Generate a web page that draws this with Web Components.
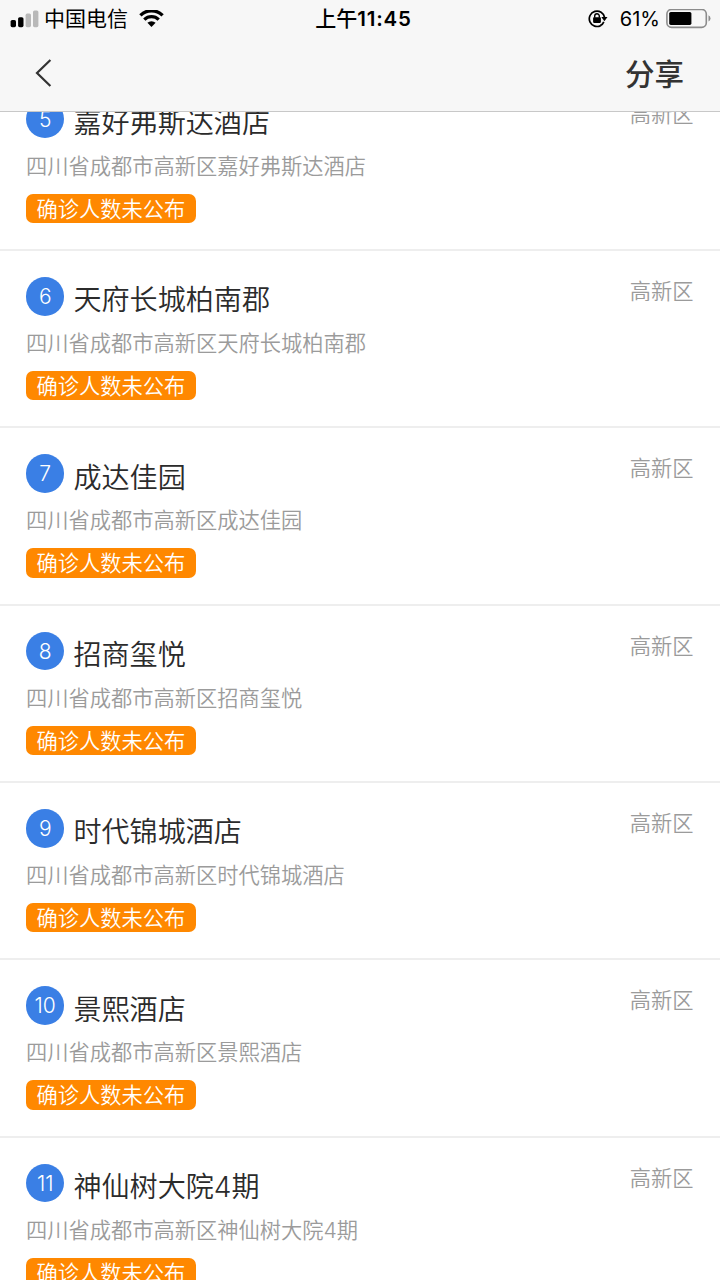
<!DOCTYPE html>
<html lang="zh-CN">
<head>
<meta charset="UTF-8">
<meta name="viewport" content="width=device-width, initial-scale=1.0">
<title>分享</title>
<style>
    html, body {
        margin: 0;
        height: 100%;
        overflow: hidden;
        background: #fff;
        font-family: "Inter", "Noto Sans CJK SC", sans-serif;
    }
</style>
</head>
<body>
<app-screen>
    <status-bar slot="top" carrier="中国电信" period="上午" time="11:45" battery="61"></status-bar>
    <nav-header slot="top">分享</nav-header>
    <place-item no="5" district="高新区" address="四川省成都市高新区嘉好弗斯达酒店" status="确诊人数未公布">嘉好弗斯达酒店</place-item>
    <place-item no="6" district="高新区" address="四川省成都市高新区天府长城柏南郡" status="确诊人数未公布">天府长城柏南郡</place-item>
    <place-item no="7" district="高新区" address="四川省成都市高新区成达佳园" status="确诊人数未公布">成达佳园</place-item>
    <place-item no="8" district="高新区" address="四川省成都市高新区招商玺悦" status="确诊人数未公布">招商玺悦</place-item>
    <place-item no="9" district="高新区" address="四川省成都市高新区时代锦城酒店" status="确诊人数未公布">时代锦城酒店</place-item>
    <place-item no="10" district="高新区" address="四川省成都市高新区景熙酒店" status="确诊人数未公布">景熙酒店</place-item>
    <place-item no="11" district="高新区" address="四川省成都市高新区神仙树大院4期" status="确诊人数未公布">神仙树大院4期</place-item>
</app-screen>

<script>
class AppScreen extends HTMLElement {
    connectedCallback() {
        this.attachShadow({ mode: 'open' });
        this.shadowRoot.innerHTML = `
            <style>
                :host {
                    display: flex;
                    flex-direction: column;
                    width: 720px;
                    height: 1280px;
                    overflow: hidden;
                }

                .top {
                    flex: none;
                    height: 111px;
                    background: #f7f7f7;
                    border-bottom: 1px solid #c8c8c8;
                }

                .list {
                    flex: 1;
                    min-height: 0;
                    overflow: hidden;
                }

                /* the list is scrolled part of the way into its first row */
                .rows {
                    margin-top: -38.2px;
                }
            </style>
            <div class="top"><slot name="top"></slot></div>
            <div class="list"><div class="rows"><slot></slot></div></div>
        `;
    }
}

class StatusBar extends HTMLElement {
    connectedCallback() {
        const battery = this.getAttribute('battery');
        this.attachShadow({ mode: 'open' });
        this.shadowRoot.innerHTML = `
            <style>
                :host {
                    display: grid;
                    grid-template-columns: 1fr auto 1fr;
                    align-items: center;
                    height: 37px;
                    padding: 0 9px 0 10px;
                    box-sizing: border-box;
                    color: #000;
                    font-size: 21px;
                    line-height: 37px;
                }

                svg {
                    display: block;
                    flex: none;
                }

                .left, .right {
                    display: flex;
                    align-items: center;
                }

                .right {
                    justify-content: flex-end;
                }

                .carrier {
                    margin: 0 11px 0 5px;
                    padding-bottom: 2px;
                    line-height: 35px;
                }

                .time {
                    padding-left: 6px;
                    padding-bottom: 1px;
                    line-height: 36px;
                    font-weight: 500;
                }

                .time b {
                    font-size: 20.5px;
                    font-weight: 600;
                    letter-spacing: 0.8px;
                }

                .percent {
                    margin: 0 6px 0 12px;
                    padding-top: 1px;
                    font-size: 20px;
                }
            </style>
            <div class="left">
                <svg width="29" height="18" viewBox="0 0 29 18">
                    <rect x="0.6" y="10" width="5.4" height="7.2" rx="1.6"/>
                    <rect x="8.1" y="7.2" width="5.4" height="10" rx="1.6"/>
                    <rect x="15.6" y="3.6" width="5.4" height="13.6" rx="1.6" fill="#b9b9b9"/>
                    <rect x="23" y="0.4" width="5.4" height="16.8" rx="1.6" fill="#b9b9b9"/>
                </svg>
                <span class="carrier">${this.getAttribute('carrier')}</span>
                <svg width="25" height="18" viewBox="0 0 25 18">
                    <g fill="none" stroke="#000" stroke-width="3.3">
                        <path d="M1.4 5.3a15.8 15.8 0 0 1 22.2 0"/>
                        <path d="M5.3 9.6a10.4 10.4 0 0 1 14.4 0"/>
                    </g>
                    <path d="M8.4 12.8a6 6 0 0 1 8.2 0L12.5 16.9z"/>
                </svg>
            </div>
            <span class="time">${this.getAttribute('period')}<b>${this.getAttribute('time')}</b></span>
            <div class="right">
                <svg width="20" height="18" viewBox="0 0 20 18">
                    <path d="M12.9 15.4A7.7 7.7 0 1 1 16.6 7.5" fill="none" stroke="#000" stroke-width="1.7"/>
                    <path d="M15.8 11.8A7.7 7.7 0 0 1 12.4 15.6" fill="none" stroke="#000" stroke-width="1.7"/>
                    <path d="M13.3 7.1h6.2l-3.1 4.2z"/>
                    <rect x="5.1" y="7.3" width="7.8" height="5.6" rx="0.8"/>
                    <path d="M6.7 7.8V6.1a2.3 2.3 0 0 1 4.6 0v1.7" fill="none" stroke="#000" stroke-width="1.4"/>
                </svg>
                <span class="percent">${battery}%</span>
                <svg width="45" height="20" viewBox="0 0 45 20">
                    <rect x="0.9" y="0.4" width="39.4" height="18" rx="4.6" fill="none" stroke="#8c8c8c" stroke-width="1.6"/>
                    <rect x="3.2" y="2.9" width="22.2" height="13" rx="1.6"/>
                    <path d="M42.5 6.3a3.4 3.4 0 0 1 0 6.2z" fill="#8c8c8c"/>
                </svg>
            </div>
        `;
    }
}

class NavHeader extends HTMLElement {
    connectedCallback() {
        this.attachShadow({ mode: 'open' });
        this.shadowRoot.innerHTML = `
            <style>
                :host {
                    display: flex;
                    align-items: center;
                    justify-content: space-between;
                    height: 74px;
                    padding: 0 36px 0 35px;
                    box-sizing: border-box;
                    color: #333;
                    font-size: 29.5px;
                    font-weight: 500;
                    line-height: 74px;
                }

                svg {
                    display: block;
                    margin-bottom: 2px;
                }
            </style>
            <svg width="17" height="28" viewBox="0 0 17 28">
                <path d="M15.4 1L2 14l13.4 13" fill="none" stroke="#333" stroke-width="2.2"/>
            </svg>
            <span><slot></slot></span>
        `;
    }
}

class PlaceItem extends HTMLElement {
    connectedCallback() {
        this.attachShadow({ mode: 'open' });
        this.shadowRoot.innerHTML = `
            <style>
                :host {
                    display: flex;
                    justify-content: space-between;
                    height: 177.33px;
                    padding: 26px 26.5px 0 26px;
                    box-sizing: border-box;
                    border-bottom: 2px solid #eee;
                    font-weight: 350;
                }

                .title {
                    display: flex;
                    align-items: center;
                    gap: 9px;
                    height: 38.4px;
                    color: #2b2b2b;
                    font-size: 28.1px;
                }

                .no {
                    width: 38.4px;
                    height: 38.4px;
                    border-radius: 50%;
                    background: #3a7fe5;
                    color: #fff;
                    font-size: 21px;
                    line-height: 39px;
                    text-align: center;
                }

                .name {
                    line-height: 38px;
                    padding-top: 8px;
                }

                .address {
                    margin-top: 11.4px;
                    color: #9b9b9b;
                    font-size: 21.25px;
                    line-height: 32px;
                }

                .status {
                    width: max-content;
                    height: 29.5px;
                    margin-top: 12px;
                    padding: 0 10.6px;
                    border-radius: 7px;
                    background: #ff8800;
                    color: #fff;
                    font-size: 21.25px;
                    line-height: 31px;
                }

                .district {
                    color: #9b9b9b;
                    font-size: 21.25px;
                    line-height: 28px;
                }
            </style>
            <div>
                <div class="title">
                    <span class="no">${this.getAttribute('no')}</span>
                    <span class="name"><slot></slot></span>
                </div>
                <div class="address">${this.getAttribute('address')}</div>
                <div class="status">${this.getAttribute('status')}</div>
            </div>
            <div class="district">${this.getAttribute('district')}</div>
        `;
    }
}

customElements.define('app-screen', AppScreen);
customElements.define('status-bar', StatusBar);
customElements.define('nav-header', NavHeader);
customElements.define('place-item', PlaceItem);
</script>
</body>
</html>
